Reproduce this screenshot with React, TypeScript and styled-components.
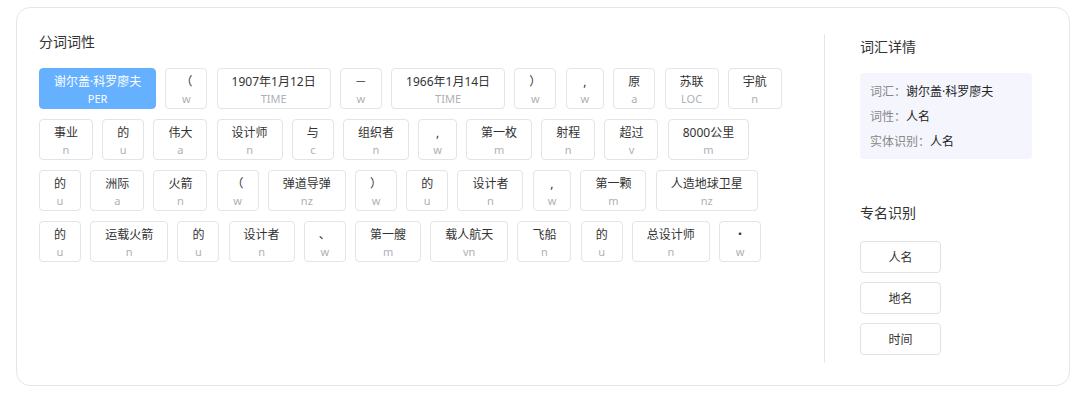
import React from 'react'
import styled, { createGlobalStyle } from 'styled-components'

interface Token {
    word: string;
    tag: string;
}

const tokens: Token[] = [
    { word: '谢尔盖·科罗廖夫', tag: 'PER' },
    { word: '（', tag: 'w' },
    { word: '1907年1月12日', tag: 'TIME' },
    { word: '－', tag: 'w' },
    { word: '1966年1月14日', tag: 'TIME' },
    { word: '）', tag: 'w' },
    { word: ',', tag: 'w' },
    { word: '原', tag: 'a' },
    { word: '苏联', tag: 'LOC' },
    { word: '宇航', tag: 'n' },
    { word: '事业', tag: 'n' },
    { word: '的', tag: 'u' },
    { word: '伟大', tag: 'a' },
    { word: '设计师', tag: 'n' },
    { word: '与', tag: 'c' },
    { word: '组织者', tag: 'n' },
    { word: ',', tag: 'w' },
    { word: '第一枚', tag: 'm' },
    { word: '射程', tag: 'n' },
    { word: '超过', tag: 'v' },
    { word: '8000公里', tag: 'm' },
    { word: '的', tag: 'u' },
    { word: '洲际', tag: 'a' },
    { word: '火箭', tag: 'n' },
    { word: '（', tag: 'w' },
    { word: '弹道导弹', tag: 'nz' },
    { word: '）', tag: 'w' },
    { word: '的', tag: 'u' },
    { word: '设计者', tag: 'n' },
    { word: ',', tag: 'w' },
    { word: '第一颗', tag: 'm' },
    { word: '人造地球卫星', tag: 'nz' },
    { word: '的', tag: 'u' },
    { word: '运载火箭', tag: 'n' },
    { word: '的', tag: 'u' },
    { word: '设计者', tag: 'n' },
    { word: '、', tag: 'w' },
    { word: '第一艘', tag: 'm' },
    { word: '载人航天', tag: 'vn' },
    { word: '飞船', tag: 'n' },
    { word: '的', tag: 'u' },
    { word: '总设计师', tag: 'n' },
    { word: '・', tag: 'w' },
]

const GlobalStyle = createGlobalStyle`
  body {
    margin: 0;
    background: #fff;
    font-family: "Noto Sans", "Noto Sans CJK SC", sans-serif;
  }
`

const Page = styled.div`
  padding: 7px 10px 10px 16px;
`
const Card = styled.div`
  display: flex;
  width: 1054px;
  box-sizing: border-box;
  border: 1px solid #e4e6eb;
  border-radius: 14px;
  padding: 26px 0 22px;
`
const LeftPane = styled.div`
  flex: 1;
  padding: 0 29px 0 22px;
`
const RightPane = styled.div`
  width: 245px;
  box-sizing: border-box;
  border-left: 1px solid #e4e6eb;
  padding: 5px 37px 8px 35px;
`
const SectionTitle = styled.div<{ $gap?: number }>`
  font-size: 14px;
  line-height: 16px;
  color: #333;
  margin-top: ${p => p.$gap || 0}px;
  margin-bottom: ${p => (p.$gap ? 20 : 18)}px;
`
const TokenWrap = styled.div`
  display: flex;
  flex-wrap: wrap;
  column-gap: 9.2px;
  row-gap: 10px;
`
const TokenBox = styled.div<{ $active?: boolean }>`
  display: flex;
  flex-direction: column;
  align-items: center;
  padding: 4px 14px 1px;
  border: 1px solid ${p => (p.$active ? '#66b1ff' : '#e3e4e8')};
  border-radius: 4px;
  background: ${p => (p.$active ? '#66b1ff' : '#fff')};
  cursor: pointer;
`
const Word = styled.span<{ $active?: boolean }>`
  font-size: 12px;
  line-height: 18px;
  color: ${p => (p.$active ? '#fff' : '#333')};
  white-space: nowrap;
`
const Tag = styled.span<{ $active?: boolean }>`
  font-size: 11px;
  line-height: 16px;
  color: ${p => (p.$active ? '#fff' : '#aeb0b5')};
`
const InfoBox = styled.div`
  background: #f4f5fd;
  border-radius: 4px;
  padding: 6px 10px 5px;
`
const InfoLine = styled.div`
  font-size: 12px;
  line-height: 25px;
  color: #222;
`
const InfoLabel = styled.span`
  color: #888;
`
const ButtonList = styled.div`
  display: flex;
  flex-direction: column;
  gap: 9.5px;
`
const EntityButton = styled.button`
  width: 81px;
  height: 31.5px;
  border: 1px solid #e1e2e6;
  border-radius: 4px;
  background: #fff;
  color: #333;
  font-family: inherit;
  font-size: 12px;
  cursor: pointer;
`

export default function App() {
    return (
        <Page>
            <GlobalStyle/>
            <Card>
                <LeftPane>
                    <SectionTitle>分词词性</SectionTitle>
                    <TokenWrap>
                        {tokens.map((t, i) => (
                            <TokenBox key={i} $active={i === 0}>
                                <Word $active={i === 0}>{t.word}</Word>
                                <Tag $active={i === 0}>{t.tag}</Tag>
                            </TokenBox>
                        ))}
                    </TokenWrap>
                </LeftPane>
                <RightPane>
                    <SectionTitle>词汇详情</SectionTitle>
                    <InfoBox>
                        <InfoLine><InfoLabel>词汇：</InfoLabel>谢尔盖·科罗廖夫</InfoLine>
                        <InfoLine><InfoLabel>词性：</InfoLabel>人名</InfoLine>
                        <InfoLine><InfoLabel>实体识别：</InfoLabel>人名</InfoLine>
                    </InfoBox>
                    <SectionTitle $gap={46}>专名识别</SectionTitle>
                    <ButtonList>
                        <EntityButton>人名</EntityButton>
                        <EntityButton>地名</EntityButton>
                        <EntityButton>时间</EntityButton>
                    </ButtonList>
                </RightPane>
            </Card>
        </Page>
    )
}
